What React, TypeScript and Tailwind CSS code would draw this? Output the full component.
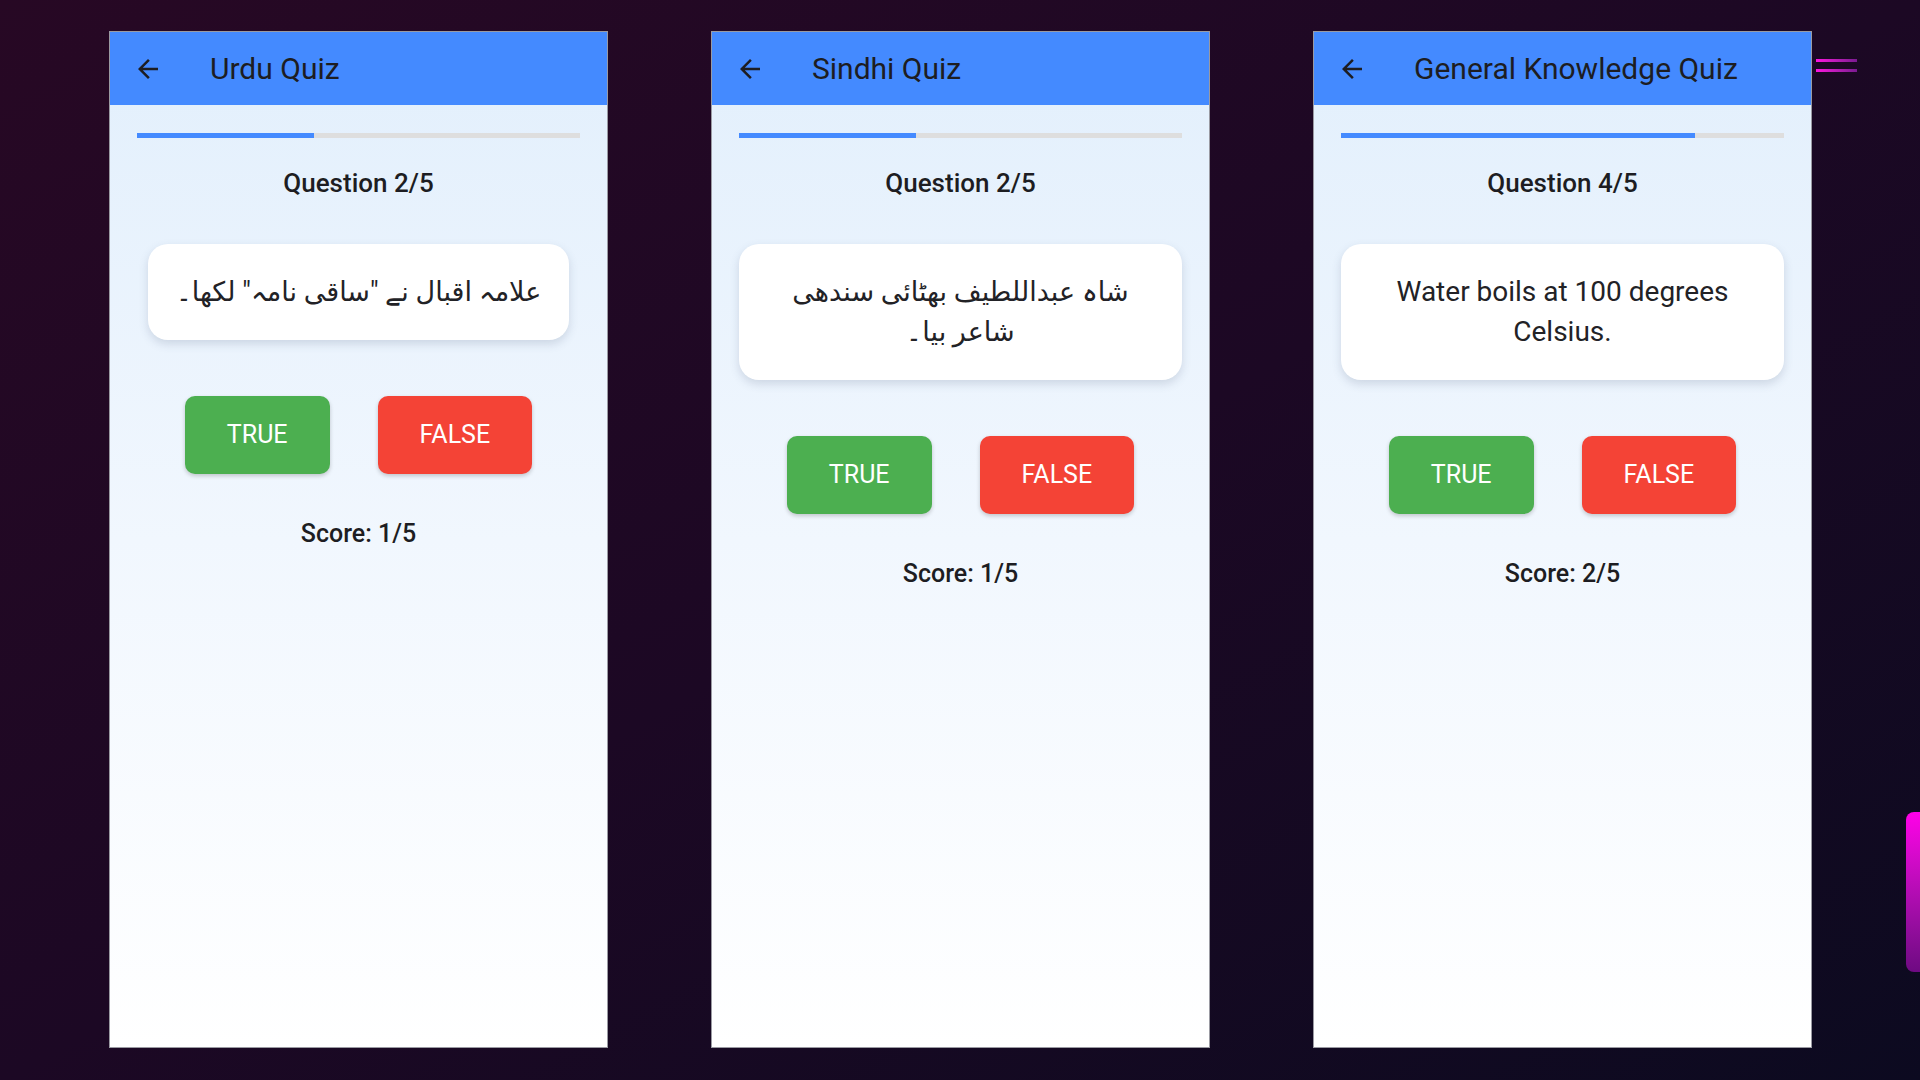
type Quiz = {
  title: string
  step: number
  question: string
  score: number
  rtl?: boolean
}

const quizzes: Quiz[] = [
  { title: 'Urdu Quiz', step: 2, question: 'علامہ اقبال نے "ساقی نامہ" لکھا۔', score: 1, rtl: true },
  { title: 'Sindhi Quiz', step: 2, question: 'شاہ عبداللطیف بھٹائی سندھی شاعر بیا۔', score: 1, rtl: true },
  { title: 'General Knowledge Quiz', step: 4, question: 'Water boils at 100 degrees Celsius.', score: 2 },
]

function BackArrow() {
  return (
    <svg viewBox="0 0 24 24" className="h-[30px] w-[30px] fill-current">
      <path d="M20 11H7.83l5.59-5.59L12 4l-8 8 8 8 1.41-1.41L7.83 13H20v-2z" />
    </svg>
  )
}

function QuizScreen({ quiz }: { quiz: Quiz }) {
  return (
    <div className="flex h-[1017px] w-[499px] shrink-0 flex-col border border-[#9a9aa2] bg-gradient-to-b from-[#e2effc] via-[#f1f7fe] to-white">
      {/* App bar */}
      <div className="flex h-[73px] shrink-0 items-center bg-[#448aff] pl-[23px] text-[#1d1d22]">
        <BackArrow />
        <span className="ml-[47px] text-[30px] leading-none">{quiz.title}</span>
      </div>

      <div className="flex flex-col items-center px-[27px] pt-[28px]">
        {/* Progress */}
        <div className="h-[5px] w-full bg-[#dedede]">
          <div className="h-full bg-[#448aff]" style={{ width: `${(quiz.step / 5) * 100}%` }} />
        </div>

        <div className="mt-[30px] text-[26px] font-medium leading-[30px] text-[#1d1d22]">
          Question {quiz.step}/5
        </div>

        {/* Question card */}
        <div className="mt-[46px] w-fit max-w-full rounded-[20px] bg-white px-[28px] py-[28px] shadow-[0_4px_10px_rgba(60,80,110,0.18)]">
          <p
            dir={quiz.rtl ? 'rtl' : 'ltr'}
            className={
              quiz.rtl
                ? 'text-center text-[27px] leading-[40px] text-[#222226]'
                : 'text-center text-[28px] leading-[40px] text-[#222226]'
            }
          >
            {quiz.question}
          </p>
        </div>

        {/* Answers */}
        <div className="mt-[56px] flex gap-[48px]">
          <button className="h-[78px] rounded-[10px] bg-[#4caf50] px-[42px] text-[25px] text-white shadow-[0_2px_4px_rgba(0,0,0,0.2)]">
            TRUE
          </button>
          <button className="h-[78px] rounded-[10px] bg-[#f44336] px-[42px] text-[25px] text-white shadow-[0_2px_4px_rgba(0,0,0,0.2)]">
            FALSE
          </button>
        </div>

        <div className="mt-[45px] text-[25px] font-medium leading-[30px] text-[#1d1d22]">
          Score: {quiz.score}/5
        </div>
      </div>
    </div>
  )
}

export default function App() {
  return (
    <div
      className="relative h-[1080px] w-[1920px] overflow-hidden bg-gradient-to-br from-[#270824] via-[#1c0824] to-[#0c0a20]"
      style={{ fontFamily: 'Roboto, "DejaVu Sans", "Noto Sans", sans-serif' }}
    >
      <div className="flex gap-[103px] pl-[109px] pt-[31px]">
        {quizzes.map((q) => (
          <QuizScreen key={q.title} quiz={q} />
        ))}
      </div>

      {/* decorative accents */}
      <div className="absolute left-[1816px] top-[59px] h-[3px] w-[41px] bg-gradient-to-r from-[#ff10e0] to-[#7a1a90]" />
      <div className="absolute left-[1816px] top-[69px] h-[3px] w-[41px] bg-gradient-to-r from-[#ff10e0] to-[#7a1a90]" />
      <div className="absolute left-[1906px] top-[812px] h-[160px] w-[30px] rounded-l-[8px] bg-gradient-to-b from-[#ff00e8] to-[#6e0a82]" />
    </div>
  )
}
